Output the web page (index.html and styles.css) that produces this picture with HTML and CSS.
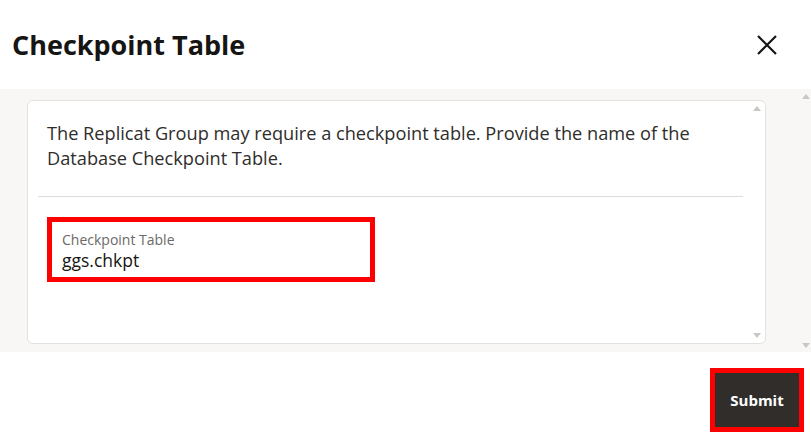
FILE: index.html
```html
<!DOCTYPE html>
<html>
<head>
<meta charset="utf-8">
<link rel="stylesheet" href="styles.css">
</head>
<body>
<div class="dialog">
  <header class="dlg-header">
    <h1 class="dlg-title">Checkpoint Table</h1>
    <button class="close-btn" aria-label="Close">
      <svg width="22" height="22" viewBox="0 0 22 22"><path d="M2 2 L20 20 M20 2 L2 20" stroke="#161513" stroke-width="2.2" fill="none"/></svg>
    </button>
  </header>
  <div class="dlg-body">
    <div class="card">
      <p class="intro">The Replicat Group may require a checkpoint table. Provide the name of the Database Checkpoint Table.</p>
      <hr class="sep">
      <div class="field highlight">
        <label class="field-label">Checkpoint Table</label>
        <div class="field-value">ggs.chkpt</div>
      </div>
      <span class="arrow up inner"></span>
      <span class="arrow down inner"></span>
    </div>
    <span class="arrow up outer"></span>
    <span class="arrow down outer"></span>
  </div>
  <footer class="dlg-footer">
    <div class="highlight btn-wrap">
      <button class="submit-btn">Submit</button>
    </div>
  </footer>
</div>
</body>
</html>
```
FILE: styles.css
```css
* { box-sizing: border-box; }
html, body { margin: 0; padding: 0; background: #fff; }
body { font-family: "Open Sans", "Noto Sans", sans-serif; color: #161513; }
.dialog { width: 811px; height: 447px; display: flex; flex-direction: column; }
.dlg-header { height: 89px; display: flex; align-items: center; justify-content: space-between; padding: 0 33px 0 12px; }
.dlg-title { margin: 0; font-size: 27px; font-weight: 700; letter-spacing: 0px; }
.close-btn { border: 0; background: none; padding: 0; width: 22px; height: 22px; display: flex; cursor: pointer; }
.dlg-body { position: relative; height: 263px; background: #f8f7f5; padding: 11px 45px 8px 27px; }
.card { position: relative; height: 100%; background: #fff; border: 1px solid #e4e2df; border-radius: 6px; padding: 0 22px 0 10px; }
.intro { margin: 0; padding: 20px 9px 0; font-size: 18.2px; line-height: 25px; color: #2f2d2b; }
.sep { margin: 25px 0 0; border: 0; border-top: 1px solid #dedcd9; }
.field { margin: 20px 0 0 9px; width: 328px; height: 65px; padding: 10px 10px 0; }
.highlight { border: 5px solid #ff0000; }
.field-label { display: block; font-size: 14px; line-height: 16px; color: #6b6966; }
.field-value { font-size: 17.5px; line-height: 24px; color: #161513; }
.arrow { position: absolute; width: 0; height: 0; border-left: 4px solid transparent; border-right: 4px solid transparent; }
.arrow.up { border-bottom: 5px solid #c9c7c4; }
.arrow.down { border-top: 5px solid #c9c7c4; }
.arrow.inner.up { top: 5px; right: 4px; }
.arrow.inner.down { bottom: 5px; right: 4px; }
.arrow.outer.up { top: 5px; right: 1px; }
.arrow.outer.down { bottom: 4px; right: 1px; }
.dlg-footer { flex: 1; display: flex; justify-content: flex-end; align-items: flex-start; padding: 16px 7px 0 0; }
.btn-wrap { width: 94px; height: 64px; }
.submit-btn { width: 100%; height: 100%; border: 0; background: #312d2a; color: #fff; font-family: "Open Sans", sans-serif; font-weight: 700; font-size: 15px; padding: 0; }
```
